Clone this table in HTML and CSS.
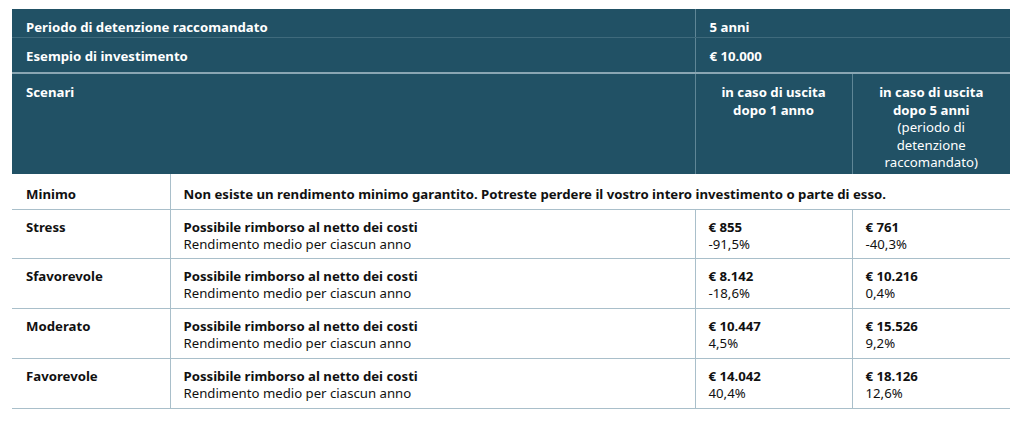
FILE: index.html
```html
<!DOCTYPE html>
<html lang="it">
<head>
<meta charset="utf-8">
<link rel="stylesheet" href="styles.css">
</head>
<body>
<table class="kid">
  <colgroup>
    <col class="c1"><col class="c2"><col class="c3"><col class="c4">
  </colgroup>
  <thead>
    <tr class="h1">
      <th colspan="2">Periodo di detenzione raccomandato</th>
      <th colspan="2" class="val">5 anni</th>
    </tr>
    <tr class="h2">
      <th colspan="2">Esempio di investimento</th>
      <th colspan="2" class="val">€ 10.000</th>
    </tr>
    <tr class="h3">
      <th colspan="2">Scenari</th>
      <th class="center">in caso di uscita<br>dopo 1 anno</th>
      <th class="center">in caso di uscita<br>dopo 5 anni<br><span class="note">(periodo di<br>detenzione<br>raccomandato)</span></th>
    </tr>
  </thead>
  <tbody>
    <tr class="r-min">
      <td class="name">Minimo</td>
      <td colspan="3" class="strong">Non esiste un rendimento minimo garantito. Potreste perdere il vostro intero investimento o parte di esso.</td>
    </tr>
    <tr class="r-first">
      <td class="name">Stress</td>
      <td><b>Possibile rimborso al netto dei costi</b><br>Rendimento medio per ciascun anno</td>
      <td><b>€ 855</b><br>-91,5%</td>
      <td><b>€ 761</b><br>-40,3%</td>
    </tr>
    <tr>
      <td class="name">Sfavorevole</td>
      <td><b>Possibile rimborso al netto dei costi</b><br>Rendimento medio per ciascun anno</td>
      <td><b>€ 8.142</b><br>-18,6%</td>
      <td><b>€ 10.216</b><br>0,4%</td>
    </tr>
    <tr>
      <td class="name">Moderato</td>
      <td><b>Possibile rimborso al netto dei costi</b><br>Rendimento medio per ciascun anno</td>
      <td><b>€ 10.447</b><br>4,5%</td>
      <td><b>€ 15.526</b><br>9,2%</td>
    </tr>
    <tr>
      <td class="name">Favorevole</td>
      <td><b>Possibile rimborso al netto dei costi</b><br>Rendimento medio per ciascun anno</td>
      <td><b>€ 14.042</b><br>40,4%</td>
      <td><b>€ 18.126</b><br>12,6%</td>
    </tr>
  </tbody>
</table>
</body>
</html>
```
FILE: styles.css
```css
html, body {
  margin: 0;
  padding: 0;
  background: #ffffff;
}
body {
  padding: 9px 14px 0 12px;
  font-family: "Noto Sans", "Open Sans", sans-serif;
  font-size: 13.2px;
  color: #111;
}
.kid {
  border-collapse: collapse;
  table-layout: fixed;
  width: 998px;
}
.c1 { width: 158px; }
.c2 { width: 525px; }
.c3 { width: 157px; }
.c4 { width: 158px; }

thead th {
  background: #215165;
  color: #fff;
  font-weight: 700;
  text-align: left;
  vertical-align: top;
  padding: 0 13px 0 14px;
  line-height: 17.5px;
  border-left: 1px solid #5f8696;
  box-sizing: border-box;
}
thead th:first-child { border-left: none; }
.h1 th { height: 28px; padding-top: 10px; border-bottom: 1px solid #3f6a7c; }
.h2 th { height: 36px; padding-top: 10px; border-bottom: 2px solid #8aa6b3; }
.h3 th { height: 101px; padding-top: 10px; }
th.center { text-align: center; padding-left: 6px; padding-right: 6px; }
.note { font-weight: 400; }

tbody td {
  vertical-align: top;
  padding: 9px 13px 0 13px;
  line-height: 17px;
  border-bottom: 1px solid #a9bfca;
  border-left: 1px solid #a9bfca;
  box-sizing: border-box;
  height: 50px;
}
tbody td.name { border-left: none; font-weight: 700; padding-left: 14px; }
.r-min td { height: 35px; padding-top: 12px; }
td.strong { font-weight: 700; }
td b { font-weight: 700; }
.r-first td { height: 49px; }
```
